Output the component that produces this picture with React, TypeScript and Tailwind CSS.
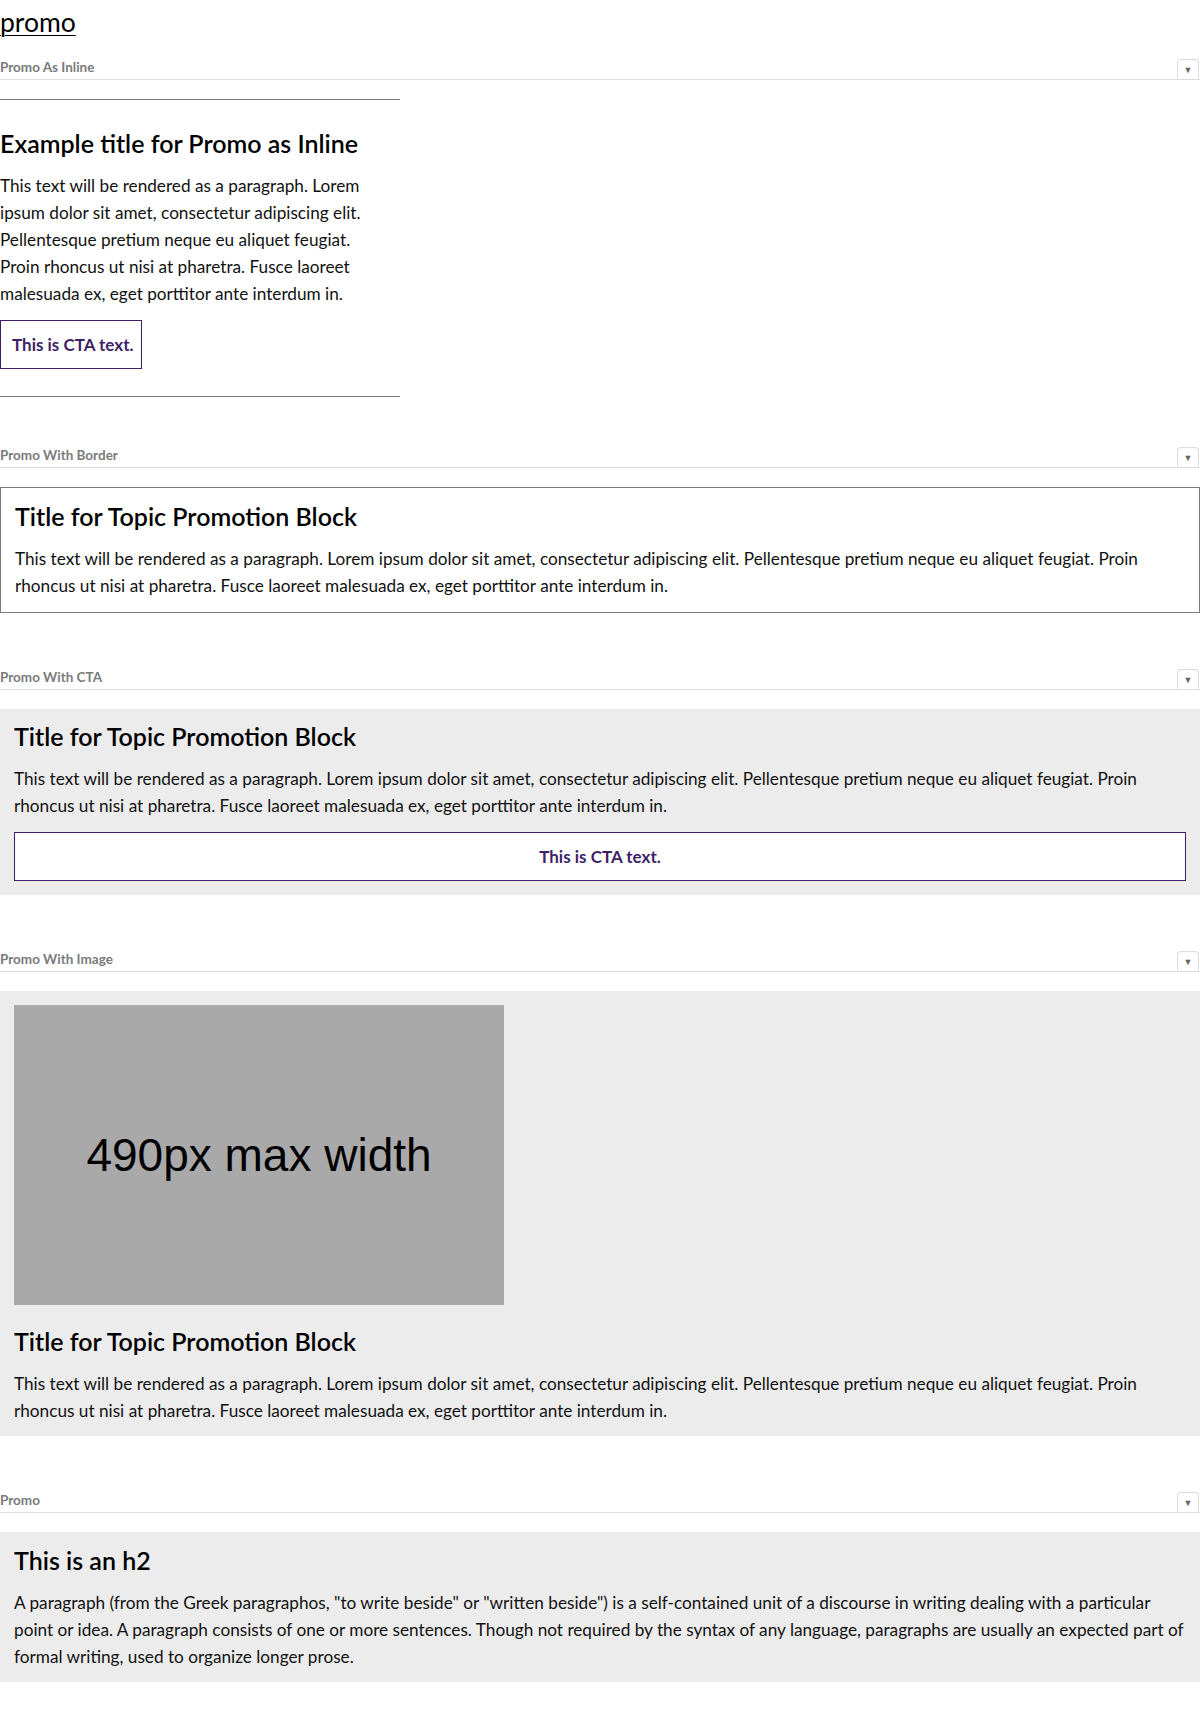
import React from 'react'

const LOREM =
  'This text will be rendered as a paragraph. Lorem ipsum dolor sit amet, consectetur adipiscing elit. Pellentesque pretium neque eu aliquet feugiat. Proin rhoncus ut nisi at pharetra. Fusce laoreet malesuada ex, eget porttitor ante interdum in.'

const PARAGRAPH =
  'A paragraph (from the Greek paragraphos, "to write beside" or "written beside") is a self-contained unit of a discourse in writing dealing with a particular point or idea. A paragraph consists of one or more sentences. Though not required by the syntax of any language, paragraphs are usually an expected part of formal writing, used to organize longer prose.'

// Header row used above every example
function SectionHeader({ label, className = '' }: { label: string; className?: string }) {
  return (
    <div className={`flex items-end justify-between border-b border-[#dcdcdc] ${className}`}>
      <span className="text-[13.5px] font-bold text-[#7a7a7a] leading-none pb-[5px]">{label}</span>
      <span className="w-[22px] h-[20px] border border-b-0 border-[#dcdcdc] rounded-t-[4px] flex items-center justify-center text-[9px] text-[#666] mr-[1px]">
        ▼
      </span>
    </div>
  )
}

function Title({ children, className = '' }: { children: React.ReactNode; className?: string }) {
  return <h2 className={`text-[25px] font-semibold leading-[29px] text-black ${className}`}>{children}</h2>
}

function Para({ children, className = '' }: { children: React.ReactNode; className?: string }) {
  return <p className={`text-[17.2px] leading-[27px] text-[#111] ${className}`}>{children}</p>
}

function Cta({ full = false }: { full?: boolean }) {
  return (
    <div
      className={`border border-[#401f68] bg-white text-[#401f68] font-bold text-[17px] h-[49px] flex items-center ${
        full ? 'justify-center' : 'w-[142px] pl-[11px]'
      }`}
    >
      This is CTA text.
    </div>
  )
}

export default function App() {
  return (
    <div className="min-h-screen bg-white font-['Lato','Noto_Sans',sans-serif] text-black">
      <h1 className="text-[26.5px] leading-[30px] pt-[7px] underline underline-offset-[3px] decoration-1">promo</h1>

      {/* Promo As Inline */}
      <SectionHeader label="Promo As Inline" className="mt-[22px]" />
      <div className="w-[400px] mt-[19px] border-t border-b border-[#7a7a7a] pt-[29px] pb-[27px]">
        <Title>Example title for Promo as Inline</Title>
        <Para className="mt-[14px] w-[375px]">{LOREM}</Para>
        <div className="mt-[13px]">
          <Cta />
        </div>
      </div>

      {/* Promo With Border */}
      <SectionHeader label="Promo With Border" className="mt-[50px]" />
      <div className="mt-[19px] border border-[#7a7a7a] px-[14px] pt-[14px] pb-[13px]">
        <Title>Title for Topic Promotion Block</Title>
        <Para className="mt-[14px]">{LOREM}</Para>
      </div>

      {/* Promo With CTA */}
      <SectionHeader label="Promo With CTA" className="mt-[56px]" />
      <div className="mt-[19px] bg-[#ececec] px-[14px] pt-[13px] pb-[14px]">
        <Title>Title for Topic Promotion Block</Title>
        <Para className="mt-[14px]">{LOREM}</Para>
        <div className="mt-[13px]">
          <Cta full />
        </div>
      </div>

      {/* Promo With Image */}
      <SectionHeader label="Promo With Image" className="mt-[56px]" />
      <div className="mt-[19px] bg-[#ececec] px-[14px] pt-[14px] pb-[12px]">
        <div className="w-[490px] h-[300px] bg-[#a9a9a9] flex items-center justify-center">
          <span className="font-['Liberation_Sans',Arial,sans-serif] text-[46px] text-black">490px max width</span>
        </div>
        <Title className="mt-[22px]">Title for Topic Promotion Block</Title>
        <Para className="mt-[14px]">{LOREM}</Para>
      </div>

      {/* Promo */}
      <SectionHeader label="Promo" className="mt-[56px]" />
      <div className="mt-[19px] bg-[#ececec] px-[14px] pt-[14px] pb-[12px]">
        <Title>This is an h2</Title>
        <Para className="mt-[14px]">{PARAGRAPH}</Para>
      </div>
      <div className="h-[37px]" />
    </div>
  )
}
